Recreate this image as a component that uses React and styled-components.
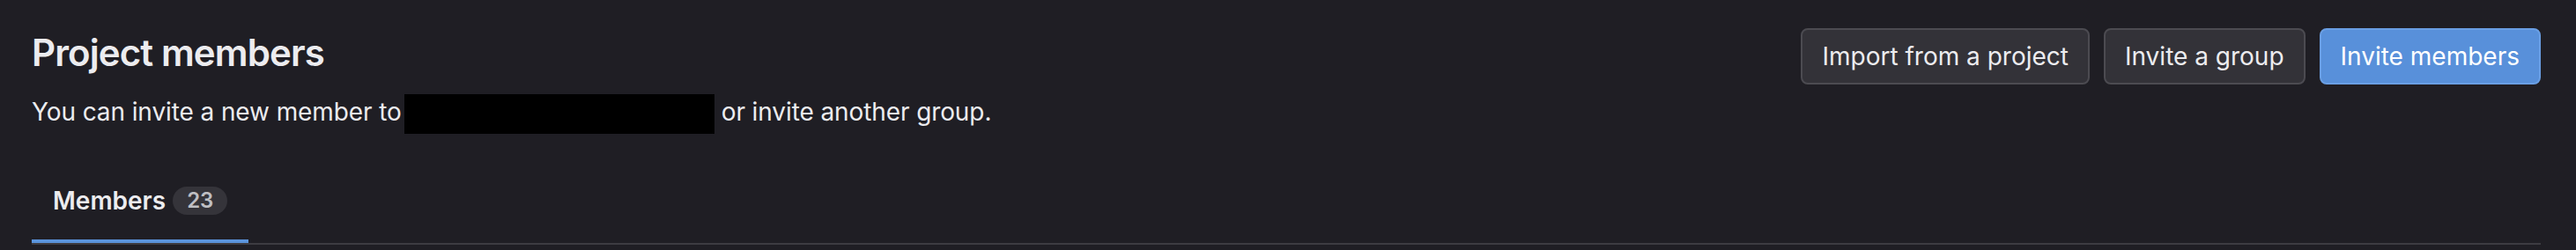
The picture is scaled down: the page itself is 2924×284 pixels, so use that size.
import React from "react";
import styled, { createGlobalStyle } from "styled-components";

const GlobalStyle = createGlobalStyle`
  html, body {
    margin: 0;
    padding: 0;
    background: #1f1e24;
  }
  body {
    font-family: Inter, "Noto Sans", "Liberation Sans", sans-serif;
    color: #ececef;
  }
`;

const Page = styled.div`
  padding: 32px 40px 6px 36px;
`;

const Header = styled.div`
  display: flex;
  justify-content: space-between;
  align-items: flex-start;
`;

const Intro = styled.div`
  display: flex;
  flex-direction: column;
`;

const Title = styled.h1`
  margin: 0;
  font-size: 42px;
  line-height: 56px;
  font-weight: 600;
  letter-spacing: -0.9px;
`;

const Description = styled.p`
  margin: 19px 0 0;
  font-size: 28px;
  line-height: 40px;
  letter-spacing: -0.1px;
`;

const Redacted = styled.span`
  display: inline-block;
  width: 352px;
  height: 45px;
  margin: 0 8px 0 3px;
  background: #000;
  vertical-align: -15px;
`;

const Actions = styled.div`
  display: flex;
  gap: 16px;
`;

const Button = styled.button`
  height: 64px;
  padding: 0 22px;
  border-radius: 8px;
  border: 2px solid ${(p) => (p.$primary ? "#6a9fe4" : "#4c4b51")};
  background: ${(p) => (p.$primary ? "#5890da" : "#333238")};
  color: ${(p) => (p.$primary ? "#ffffff" : "#ececef")};
  font-family: inherit;
  font-size: 28px;
  line-height: 40px;
  cursor: pointer;
`;

const TabList = styled.div`
  display: flex;
  margin-top: 32px;
  border-bottom: 2px solid #3d3c42;
`;

const Tab = styled.div`
  display: flex;
  align-items: center;
  gap: 8px;
  padding: 24px 24px 28px;
  font-size: 28px;
  line-height: 40px;
  font-weight: ${(p) => (p.$active ? 600 : 400)};
  box-shadow: ${(p) => (p.$active ? "inset 0 -4px 0 #5b94dc" : "none")};
`;

const Count = styled.span`
  display: inline-flex;
  align-items: center;
  height: 32px;
  padding: 0 16px;
  border-radius: 16px;
  background: #35343a;
  color: #bfbfc3;
  font-size: 24px;
  font-weight: 600;
`;

export default function App() {
  return (
    <>
      <GlobalStyle />
      <Page>
        <Header>
          <Intro>
            <Title>Project members</Title>
            <Description>
              You can invite a new member to
              <Redacted />
              or invite another group.
            </Description>
          </Intro>
          <Actions>
            <Button>Import from a project</Button>
            <Button>Invite a group</Button>
            <Button $primary>Invite members</Button>
          </Actions>
        </Header>
        <TabList>
          <Tab $active>
            Members <Count>23</Count>
          </Tab>
        </TabList>
      </Page>
    </>
  );
}
